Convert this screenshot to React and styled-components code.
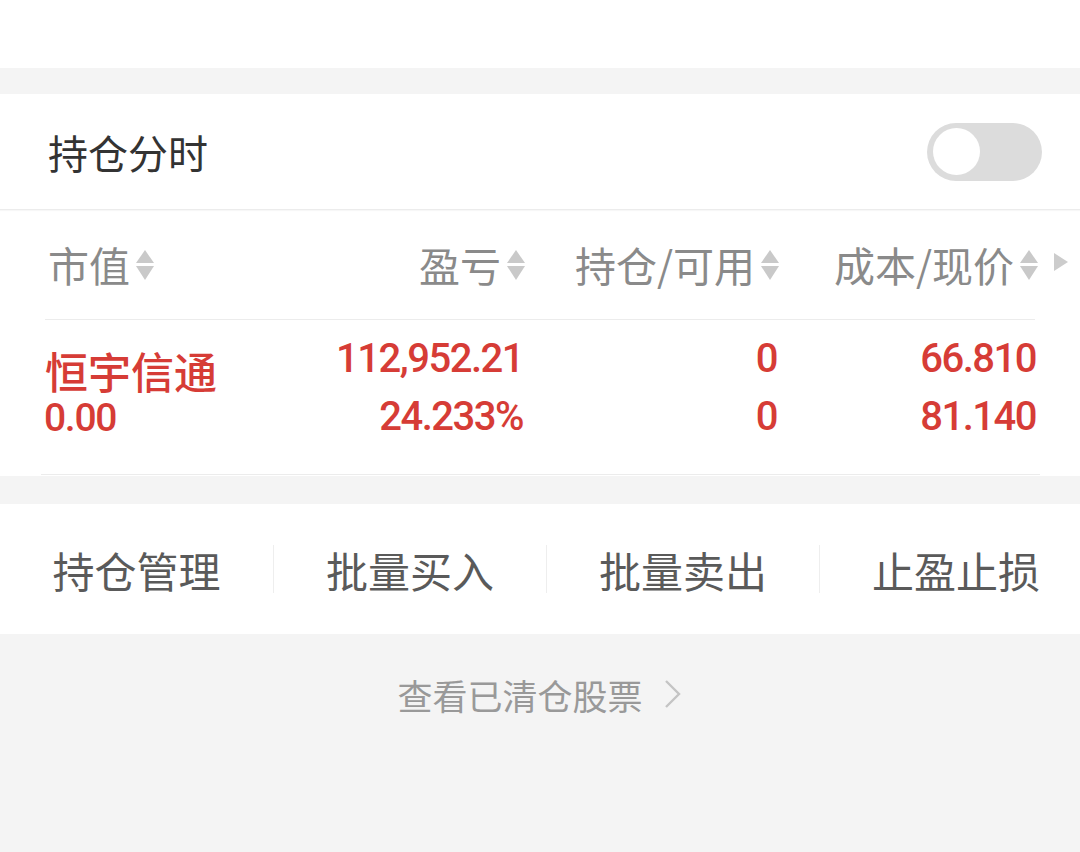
import React, { useState } from "react";
import styled, { createGlobalStyle } from "styled-components";

const Global = createGlobalStyle`
  html, body { margin: 0; padding: 0; background: #f4f4f4; }
  body { font-family: "Noto Sans CJK SC", "Noto Sans", sans-serif; }
  * { box-sizing: border-box; }
`;

const RED = "#d63c36";
const NUM_FONT = `Roboto, "Noto Sans CJK SC", sans-serif`;

const Page = styled.div`
  width: 1080px;
  height: 852px;
  background: #f4f4f4;
  overflow: hidden;
  display: flex;
  flex-direction: column;
`;

const TopBar = styled.div`
  height: 68px;
  background: #fff;
`;

const Card = styled.section`
  margin-top: ${(p) => p.$gap}px;
  background: #fff;
`;

const ToggleRow = styled.div`
  height: 116px;
  display: flex;
  align-items: center;
  justify-content: space-between;
  padding: 0 38px 0 48px;
  border-bottom: 1px solid #ececec;
  box-shadow: 0 1px 1px rgba(0, 0, 0, 0.03);
`;

const Title = styled.span`
  font-size: 40px;
  color: #333;
  line-height: 1;
`;

const Switch = styled.button`
  width: 115px;
  height: 58px;
  border-radius: 29px;
  border: none;
  padding: 0 6px;
  background: ${(p) => (p.$on ? RED : "#dcdcdc")};
  display: flex;
  align-items: center;
  justify-content: ${(p) => (p.$on ? "flex-end" : "flex-start")};
  cursor: pointer;
`;

const Knob = styled.span`
  width: 47px;
  height: 47px;
  border-radius: 50%;
  background: #fff;
`;

const Grid = styled.div`
  display: grid;
  grid-template-columns: 255px 223px 254px 259px 44px;
  padding-left: 45px;
`;

const HeaderRow = styled(Grid)`
  height: 109px;
  align-items: center;
`;

const HeadCell = styled.div`
  display: flex;
  align-items: center;
  justify-content: ${(p) => (p.$left ? "flex-start" : "flex-end")};
  padding-left: ${(p) => (p.$left ? 3 : 0)}px;
  margin-right: ${(p) => (p.$left ? 0 : -4)}px;
  font-size: 41px;
  color: #8a8a8a;
  line-height: 1;
  white-space: nowrap;
`;

const SortIcon = styled.svg`
  width: 22px;
  height: 34px;
  margin-left: 4px;
  flex: none;
`;

const MoreArrow = styled.svg`
  width: 16px;
  height: 20px;
  margin-left: 17px;
`;

const RowLine = styled.div`
  height: 1px;
  background: #ececec;
  margin: 0 ${(p) => p.$r}px 0 ${(p) => p.$l}px;
`;

const DataRow = styled(Grid)`
  height: 154px;
  align-items: start;
`;

const NameCell = styled.div`
  padding-top: 30px;
  display: flex;
  flex-direction: column;
  color: ${RED};
`;

const Name = styled.span`
  font-size: 43px;
  line-height: 40px;
  font-weight: 500;
  white-space: nowrap;
`;

const NumSmall = styled.span`
  margin-top: 4px;
  font-family: ${NUM_FONT};
  font-size: 39px;
  line-height: 48px;
  font-weight: 500;
  letter-spacing: -1.3px;
  margin-left: -1px;
`;

const NumCell = styled.div`
  padding-top: 10px;
  display: flex;
  flex-direction: column;
  align-items: flex-end;
  color: ${RED};
  font-family: ${NUM_FONT};
  font-size: 40px;
  font-weight: 500;
  line-height: 58px;
  letter-spacing: -1.5px;
  white-space: nowrap;
`;

const ActionBar = styled.nav`
  margin-top: 28px;
  height: 130px;
  background: #fff;
  display: grid;
  grid-template-columns: repeat(4, 273px);
  align-items: center;
  overflow: hidden;
`;

const Action = styled.div`
  height: 48px;
  display: flex;
  align-items: center;
  justify-content: center;
  font-size: 42px;
  color: #5a5a5a;
  border-left: ${(p) => (p.$first ? "none" : "1px solid #eeeeee")};
  white-space: nowrap;
`;

const Footer = styled.div`
  flex: 1;
  display: flex;
  justify-content: center;
  padding-top: 40px;
`;

const ClearedLink = styled.a`
  display: flex;
  align-items: center;
  height: 40px;
  font-size: 35px;
  color: #999;
  text-decoration: none;
  cursor: pointer;
`;

const Chevron = styled.svg`
  width: 20px;
  height: 30px;
  margin-left: 20px;
`;

const Sort = () => (
  <SortIcon viewBox="0 0 22 34">
    <polygon points="11,2 20,15 2,15" fill="#c9c9c9" />
    <polygon points="2,18 20,18 11,32" fill="#c9c9c9" />
  </SortIcon>
);

const headers = ["市值", "盈亏", "持仓/可用", "成本/现价"];
const actions = ["持仓管理", "批量买入", "批量卖出", "止盈止损"];

export default function App() {
  const [on, setOn] = useState(false);
  return (
    <Page>
      <Global />
      <TopBar />
      <Card $gap={26}>
        <ToggleRow>
          <Title>持仓分时</Title>
          <Switch $on={on} onClick={() => setOn(!on)} aria-label="持仓分时">
            <Knob />
          </Switch>
        </ToggleRow>
        <HeaderRow>
          {headers.map((h, i) => (
            <HeadCell key={h} $left={i === 0}>
              {h}
              <Sort />
            </HeadCell>
          ))}
          <div>
            <MoreArrow viewBox="0 0 16 20">
              <polygon points="1,1 15,10 1,19" fill="#cccccc" />
            </MoreArrow>
          </div>
        </HeaderRow>
        <RowLine $l={45} $r={45} />
        <DataRow>
          <NameCell>
            <Name>恒宇信通</Name>
            <NumSmall>0.00</NumSmall>
          </NameCell>
          <NumCell>
            <span>112,952.21</span>
            <span>24.233%</span>
          </NumCell>
          <NumCell>
            <span>0</span>
            <span>0</span>
          </NumCell>
          <NumCell>
            <span>66.810</span>
            <span>81.140</span>
          </NumCell>
        </DataRow>
        <RowLine $l={41} $r={40} />
        <div style={{ height: 1 }} />
      </Card>
      <ActionBar>
        {actions.map((a, i) => (
          <Action key={a} $first={i === 0}>
            {a}
          </Action>
        ))}
      </ActionBar>
      <Footer>
        <ClearedLink>
          查看已清仓股票
          <Chevron viewBox="0 0 20 30">
            <polyline points="3,2 16,15 3,28" fill="none" stroke="#c4c4c4" strokeWidth="2.4" />
          </Chevron>
        </ClearedLink>
      </Footer>
    </Page>
  );
}
